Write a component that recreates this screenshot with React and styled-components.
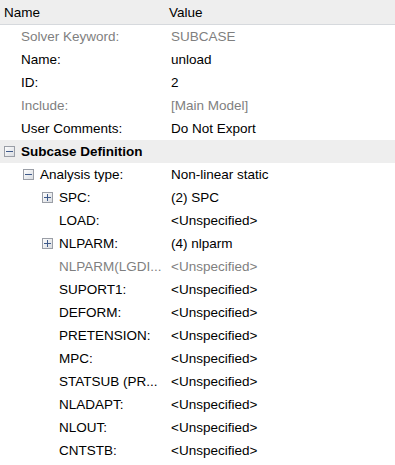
import React from "react";
import styled, { createGlobalStyle } from "styled-components";

const GlobalStyle = createGlobalStyle`
  html, body {
    margin: 0;
    padding: 0;
    background: #ffffff;
  }
  body {
    font-family: "Liberation Sans", Arial, sans-serif;
    font-size: 13.5px;
  }
`;

const Table = styled.div`
  width: 395px;
  height: 465px;
  overflow: hidden;
  background: #ffffff;
`;

const Header = styled.div`
  display: flex;
  align-items: center;
  height: 24px;
  background: #eeeeee;
  border-bottom: 1px solid #d6d9dd;
  color: #000000;
`;

const HeaderCell = styled.div`
  width: ${(p) => p.$width || "auto"};
  flex: ${(p) => (p.$width ? "none" : "1")};
  padding-left: ${(p) => p.$pad}px;
  box-sizing: border-box;
`;

const Row = styled.div`
  display: flex;
  align-items: center;
  height: 23px;
  background: ${(p) => (p.$section ? "#eeeeee" : "#ffffff")};
  color: ${(p) => (p.$disabled ? "#7f7f7f" : "#000000")};
`;

const LabelCell = styled.div`
  display: flex;
  align-items: center;
  width: 167px;
  flex: none;
  box-sizing: border-box;
  padding-left: ${(p) => 4 + p.$level * 19}px;
  white-space: nowrap;
  overflow: hidden;
  font-weight: ${(p) => (p.$bold ? "bold" : "normal")};
`;

const Slot = styled.span`
  display: inline-flex;
  align-items: center;
  width: 17px;
  flex: none;
`;

const ValueCell = styled.div`
  flex: 1;
  padding-left: 4px;
  white-space: nowrap;
`;

const ToggleBox = styled.svg`
  display: block;
  width: 11px;
  height: 11px;
`;

const Toggle = ({ open }) => (
  <ToggleBox viewBox="0 0 11 11">
    <defs>
      <linearGradient id="tg" x1="0" y1="0" x2="1" y2="1">
        <stop offset="0" stopColor="#ffffff" />
        <stop offset="1" stopColor="#d8dbe0" />
      </linearGradient>
    </defs>
    <rect x="0.5" y="0.5" width="10" height="10" fill="url(#tg)" stroke="#9a9ea6" />
    <rect x="2" y="5" width="7" height="1" fill="#3f5a8a" />
    {!open && <rect x="5" y="2" width="1" height="7" fill="#3f5a8a" />}
  </ToggleBox>
);

const rows = [
  { label: "Solver Keyword:", value: "SUBCASE", level: 0, disabled: true },
  { label: "Name:", value: "unload", level: 0 },
  { label: "ID:", value: "2", level: 0 },
  { label: "Include:", value: "[Main Model]", level: 0, disabled: true },
  { label: "User Comments:", value: "Do Not Export", level: 0 },
  { label: "Subcase Definition", level: 0, section: true, toggle: "open" },
  { label: "Analysis type:", value: "Non-linear static", level: 1, toggle: "open" },
  { label: "SPC:", value: "(2) SPC", level: 2, toggle: "closed" },
  { label: "LOAD:", value: "<Unspecified>", level: 2 },
  { label: "NLPARM:", value: "(4) nlparm", level: 2, toggle: "closed" },
  { label: "NLPARM(LGDI...", value: "<Unspecified>", level: 2, disabled: true },
  { label: "SUPORT1:", value: "<Unspecified>", level: 2 },
  { label: "DEFORM:", value: "<Unspecified>", level: 2 },
  { label: "PRETENSION:", value: "<Unspecified>", level: 2 },
  { label: "MPC:", value: "<Unspecified>", level: 2 },
  { label: "STATSUB (PR...", value: "<Unspecified>", level: 2 },
  { label: "NLADAPT:", value: "<Unspecified>", level: 2 },
  { label: "NLOUT:", value: "<Unspecified>", level: 2 },
  { label: "CNTSTB:", value: "<Unspecified>", level: 2 },
];

export default function App() {
  return (
    <>
      <GlobalStyle />
      <Table>
        <Header>
          <HeaderCell $width="167px" $pad={4}>Name</HeaderCell>
          <HeaderCell $pad={2}>Value</HeaderCell>
        </Header>
        {rows.map((r, i) => (
          <Row key={i} $section={r.section} $disabled={r.disabled}>
            <LabelCell $level={r.level} $bold={r.section}>
              <Slot>{r.toggle && <Toggle open={r.toggle === "open"} />}</Slot>
              {r.label}
            </LabelCell>
            {!r.section && <ValueCell>{r.value}</ValueCell>}
          </Row>
        ))}
      </Table>
    </>
  );
}
